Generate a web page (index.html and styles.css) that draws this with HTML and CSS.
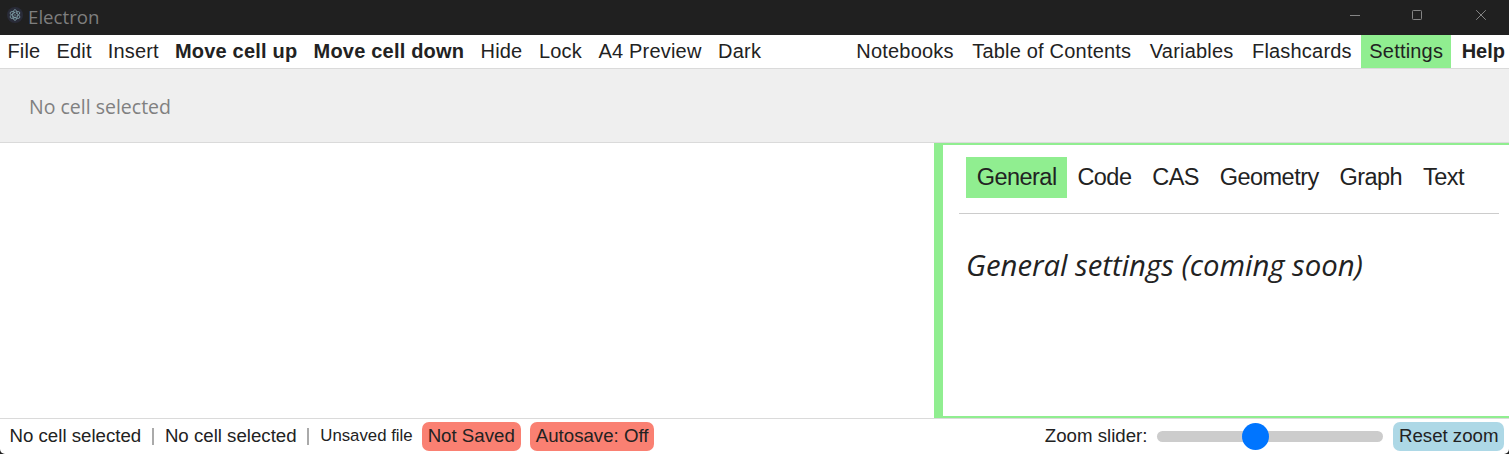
FILE: index.html
```html
<!DOCTYPE html>
<html lang="en">
<head>
<meta charset="utf-8">
<title>Electron</title>
<link rel="stylesheet" href="styles.css">
</head>
<body>
<div class="app">
  <header class="titlebar">
    <svg class="logo" width="16" height="16" viewBox="0 0 16 16">
      <circle cx="8" cy="8" r="8" fill="#292b38"/>
      <g fill="none" stroke="#86a8b0" stroke-width="0.8">
        <ellipse cx="8" cy="8" rx="5.4" ry="2.3" transform="rotate(30 8 8)" stroke-dasharray="8 1.2"/>
        <ellipse cx="8" cy="8" rx="5.4" ry="2.3" transform="rotate(90 8 8)" stroke-dasharray="8 1.2"/>
        <ellipse cx="8" cy="8" rx="5.4" ry="2.3" transform="rotate(150 8 8)" stroke-dasharray="8 1.2"/>
      </g>
      <circle cx="8" cy="8" r="0.7" fill="#86a8b0"/>
    </svg>
    <span class="title">Electron</span>
    <svg class="window-controls" width="140" height="12" viewBox="0 0 140 12" fill="none" stroke="#858585">
      <path d="M1 6.5H11"/>
      <rect x="63.5" y="1.5" width="9" height="9" rx="0.8"/>
      <path d="M127.2 1.2L136.8 10.8M136.8 1.2L127.2 10.8"/>
    </svg>
  </header>
  <nav class="menubar">
    <div class="menu-left">
      <span>File</span><span>Edit</span><span>Insert</span><b>Move cell up</b><b>Move cell down</b><span>Hide</span><span>Lock</span><span>A4 Preview</span><span>Dark</span>
    </div>
    <div class="menu-right">
      <span>Notebooks</span><span>Table of Contents</span><span>Variables</span><span>Flashcards</span><span class="active">Settings</span><b>Help</b>
    </div>
  </nav>
  <div class="toolbar">No cell selected</div>
  <main class="workspace">
    <section class="document"></section>
    <aside class="panel">
      <div class="tabs">
        <span class="active">General</span><span>Code</span><span>CAS</span><span>Geometry</span><span>Graph</span><span>Text</span>
      </div>
      <p class="message">General settings (coming soon)</p>
    </aside>
  </main>
  <footer class="statusbar">
    <span>No cell selected</span>
    <i class="separator"></i>
    <span>No cell selected</span>
    <i class="separator"></i>
    <span class="filename">Unsaved file</span>
    <span class="chip unsaved">Not Saved</span>
    <span class="chip autosave">Autosave: Off</span>
    <span class="zoom-label">Zoom slider:</span>
    <span class="slider"><span class="thumb"></span></span>
    <span class="chip reset">Reset zoom</span>
  </footer>
</div>
</body>
</html>
```
FILE: styles.css
```css
* { box-sizing: border-box; }
body {
  margin: 0;
  background: #202020;
  color: #222;
  font-family: "Liberation Sans", Arial, sans-serif;
}
.app {
  display: flex;
  flex-direction: column;
  height: 454px;
  overflow: hidden;
  white-space: nowrap;
}
.titlebar {
  display: flex;
  flex: 0 0 35px;
  padding-left: 7px;
  background: #202020;
}
.logo { margin-top: 7px; }
.title {
  margin-left: 5px;
  color: #7e7e7e;
  font: 18.7px/34px "Open Sans", sans-serif;
}
.window-controls { margin: 9px 20px 0 auto; }
.menubar {
  display: flex;
  justify-content: space-between;
  flex: 0 0 34px;
  border-bottom: 1px solid #dadada;
  background: #fff;
  font-size: 20px;
  line-height: 32px;
}
.menu-left, .menu-right { display: flex; letter-spacing: 0.2px; }
.menu-left > * { padding: 0 8.6px 0 7.4px; }
.menu-left b { padding-right: 8.9px; }
.menu-left b ~ span { padding-right: 9.1px; }
.menu-right > * { padding: 0 9.5px 0 9px; }
.menu-right .active { padding: 0 8px; background: #90ee90; }
.menu-right b { padding: 0 4px 0 10.5px; letter-spacing: 0; }
.toolbar {
  flex: 0 0 74px;
  padding: 2px 0 0 29px;
  border-bottom: 1px solid #dadada;
  background: #efefef;
  color: #808080;
  font: 19.5px/71px "Open Sans", sans-serif;
}
.workspace {
  display: flex;
  flex: 0 0 275px;
  background: #fff;
}
.document { flex: 1; }
.panel {
  width: 575px;
  padding: 12px 10px 0 16px;
  border: solid #90ee90;
  border-width: 2px 0 2px 9px;
}
.tabs {
  display: flex;
  height: 57px;
  padding-left: 7px;
  border-bottom: 1px solid #ccc;
  font-size: 23.5px;
  line-height: 40px;
  letter-spacing: -0.53px;
}
.tabs span { height: 41px; padding: 0 10.1px 0 10.7px; }
.tabs .active { background: #90ee90; }
.message {
  margin: 30px 0 0 7px;
  font: italic 29.3px/42px "Open Sans", sans-serif;
}
.statusbar {
  display: flex;
  flex: 0 0 36px;
  padding: 3px 5px 0 9.5px;
  border-top: 1px solid #dadada;
  border-radius: 0 0 5px 5px;
  background: #fff;
  font-size: 18.67px;
  line-height: 28px;
}
.separator { width: 2px; height: 17px; margin: 6px 11px 0 10.7px; background: #aaa; }
.filename { font-size: 16.8px; }
.chip {
  height: 29px;
  padding: 0 6px;
  border-radius: 7px;
  background: salmon;
}
.unsaved { margin-left: 9px; }
.autosave { margin-left: 9px; }
.zoom-label { margin-left: auto; }
.slider {
  display: flex;
  align-items: center;
  width: 226px;
  height: 11px;
  margin: 9px 10px 0;
  padding-left: 85px;
  border-radius: 6px;
  background: #ccc;
}
.thumb { width: 27px; height: 27px; border-radius: 50%; background: #0075ff; }
.reset { padding: 0 5.5px; background: lightblue; }
```
